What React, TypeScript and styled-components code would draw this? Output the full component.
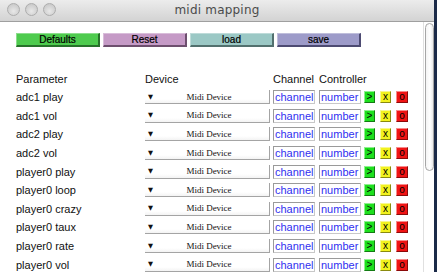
import * as React from 'react';
import styled, { createGlobalStyle } from 'styled-components';

const GlobalStyle = createGlobalStyle`
  html, body {
    margin: 0;
    padding: 0;
    background: #1b2a48;
    overflow: hidden;
  }
`;

const PARAMS = [
  'adc1 play',
  'adc1 vol',
  'adc2 play',
  'adc2 vol',
  'player0 play',
  'player0 loop',
  'player0 crazy',
  'player0 taux',
  'player0 rate',
  'player0 vol',
];

const Window = styled.div`
  width: 434px;
  height: 272px;
  background: #ffffff;
  display: flex;
  flex-direction: column;
  overflow: hidden;
  font-family: "Liberation Sans", Arial, sans-serif;
`;

const TitleBar = styled.div`
  height: 21px;
  flex: none;
  display: flex;
  align-items: center;
  position: relative;
  background: linear-gradient(#ececec, #d3d3d3);
  border-bottom: 1px solid #9f9f9f;
`;

const Lights = styled.div`
  display: flex;
  gap: 5px;
  padding-left: 7px;
  margin-top: -2px;
`;

const Light = styled.span`
  width: 11px;
  height: 11px;
  border-radius: 50%;
  background: radial-gradient(circle at 50% 65%, #e8e8e8, #c2c2c2);
  border: 1px solid #adadad;
  box-sizing: content-box;
`;

const Title = styled.div`
  position: absolute;
  left: 0;
  right: 0;
  top: 3px;
  text-align: center;
  font-family: "DejaVu Sans", "Liberation Sans", sans-serif;
  font-size: 12px;
  color: #4b4b4b;
  letter-spacing: 0.2px;
`;

const Body = styled.div`
  flex: 1;
  display: flex;
  min-height: 0;
`;

const Content = styled.div`
  flex: 1;
  padding: 11px 0 0 16px;
  overflow: hidden;
`;

const Toolbar = styled.div`
  display: flex;
  gap: 3px;
`;

const ToolButton = styled.div<{ $bg: string; $dark: string }>`
  width: 84px;
  height: 14px;
  box-sizing: border-box;
  background: ${p => p.$bg};
  border-top: 1px solid rgba(255, 255, 255, 0.35);
  border-left: 1px solid rgba(255, 255, 255, 0.35);
  border-right: 2px solid ${p => p.$dark};
  border-bottom: 2px solid ${p => p.$dark};
  font-size: 10px;
  line-height: 11px;
  text-align: center;
  color: #000;
  -webkit-text-stroke: 0.2px #000;
`;

const Table = styled.div`
  margin-top: 25px;
  display: flex;
  flex-direction: column;
`;

const HeaderRow = styled.div`
  display: flex;
  align-items: center;
  height: 14px;
  font-size: 11px;
  color: #111;
  margin-bottom: 2px;
`;

const Row = styled.div`
  display: flex;
  align-items: center;
  height: 18.6px;
`;

const ParamCell = styled.div<{ $w: number }>`
  width: ${p => p.$w}px;
  flex: none;
  font-size: 11px;
  color: #111;
  white-space: nowrap;
`;

const DeviceBox = styled.div`
  width: 125px;
  height: 14px;
  box-sizing: border-box;
  flex: none;
  display: flex;
  align-items: center;
  border-bottom: 1px solid #a4a4a4;
  border-right: 1px solid #a4a4a4;
  background: linear-gradient(#ffffff 70%, #f3f3f3);
  margin-right: 3px;
`;

const Arrow = styled.span`
  font-family: "DejaVu Sans", sans-serif;
  font-size: 6.5px;
  width: 9px;
  padding-left: 3px;
  color: #111;
`;

const DeviceName = styled.span`
  flex: 1;
  text-align: center;
  font-family: "Liberation Serif", "Times New Roman", serif;
  font-size: 9px;
  color: #111;
  padding-right: 8px;
`;

const Field = styled.div<{ $gap: number }>`
  width: 42px;
  height: 14px;
  box-sizing: border-box;
  flex: none;
  border: 1px solid #c8c8c8;
  border-top-color: #9a9a9a;
  border-left-color: #9a9a9a;
  color: #3030f0;
  font-size: 11px;
  line-height: 12px;
  padding-left: 1px;
  overflow: hidden;
  white-space: nowrap;
  margin-right: ${p => p.$gap}px;
`;

const MiniButton = styled.div<{ $bg: string; $dark: string; $w: number }>`
  width: ${p => p.$w}px;
  height: 12px;
  box-sizing: border-box;
  flex: none;
  background: ${p => p.$bg};
  border-top: 1px solid rgba(255, 255, 255, 0.5);
  border-left: 1px solid rgba(255, 255, 255, 0.5);
  border-right: 1px solid ${p => p.$dark};
  border-bottom: 1px solid ${p => p.$dark};
  font-size: 10px;
  line-height: 10px;
  text-align: center;
  color: #000;
  margin-right: 5px;
`;

const ScrollTrack = styled.div`
  width: 10px;
  flex: none;
  background: #ffffff;
  border-left: 1px solid #e0e0e0;
  padding-top: 1px;
`;

const ScrollThumb = styled.div`
  width: 7px;
  height: 146px;
  margin-left: 1px;
  border: 1px solid #a6a6a6;
  border-radius: 5px;
  background: linear-gradient(90deg, #f4f4f4, #ffffff 60%, #e8e8e8);
`;

const TOOLS = [
  { label: 'Defaults', bg: '#4ecb4e', dark: '#27712a' },
  { label: 'Reset', bg: '#c59ac6', dark: '#6d4f6e' },
  { label: 'load', bg: '#9bc8c5', dark: '#52706e' },
  { label: 'save', bg: '#9d9bc9', dark: '#4d4b72' },
];

export default function App() {
  return (
    <>
      <GlobalStyle />
      <Window>
        <TitleBar>
          <Lights>
            <Light />
            <Light />
            <Light />
          </Lights>
          <Title>midi mapping</Title>
        </TitleBar>
        <Body>
          <Content>
            <Toolbar>
              {TOOLS.map(t => (
                <ToolButton key={t.label} $bg={t.bg} $dark={t.dark}>
                  {t.label}
                </ToolButton>
              ))}
            </Toolbar>
            <Table>
              <HeaderRow>
                <ParamCell $w={129}>Parameter</ParamCell>
                <ParamCell $w={128}>Device</ParamCell>
                <ParamCell $w={46}>Channel</ParamCell>
                <ParamCell $w={60}>Controller</ParamCell>
              </HeaderRow>
              {PARAMS.map(name => (
                <Row key={name}>
                  <ParamCell $w={129}>{name}</ParamCell>
                  <DeviceBox>
                    <Arrow>▼</Arrow>
                    <DeviceName>Midi Device</DeviceName>
                  </DeviceBox>
                  <Field $gap={4}>channel</Field>
                  <Field $gap={3}>number</Field>
                  <MiniButton $bg="#1ee01e" $dark="#147a14" $w={11}>&gt;</MiniButton>
                  <MiniButton $bg="#f2f21e" $dark="#8a8a10" $w={11}>x</MiniButton>
                  <MiniButton $bg="#f01414" $dark="#8a0a0a" $w={12}>o</MiniButton>
                </Row>
              ))}
            </Table>
          </Content>
          <ScrollTrack>
            <ScrollThumb />
          </ScrollTrack>
        </Body>
      </Window>
    </>
  );
}
